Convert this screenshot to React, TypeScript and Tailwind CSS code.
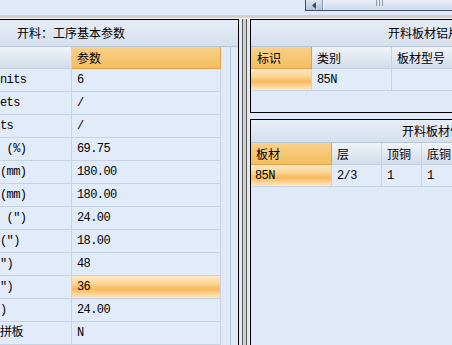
import React from "react"

const MONO = "font-['Liberation_Mono','Noto_Sans_CJK_SC',monospace]"
const CJK = "font-['Noto_Sans_CJK_SC',sans-serif]"

const ROWS: { label: string; value: string; active?: boolean }[] = [
    { label: "nits", value: "6" },
    { label: "ets", value: "/" },
    { label: "ts", value: "/" },
    { label: "\u00a0(%)", value: "69.75" },
    { label: "(mm)", value: "180.00" },
    { label: "(mm)", value: "180.00" },
    { label: "\u00a0(\u2033)", value: "24.00" },
    { label: "(\u2033)", value: "18.00" },
    { label: "\u2033)", value: "48" },
    { label: "\u2033)", value: "36", active: true },
    { label: ")", value: "24.00" },
    { label: "拼板", value: "N" },
]

const orangeHead = "bg-gradient-to-b from-[#f9d189] to-[#f5bd5e] border-b border-[#e0a245]"
const grayHead = "bg-gradient-to-b from-[#f0f4f9] to-[#d3dce9] border-b border-[#b7c4d6]"
const activeCell = "bg-[linear-gradient(to_bottom,#fde9c4_0%,#fcd493_35%,#f9b95a_60%,#fdd9a0_85%,#fee7c2_100%)]"

const Cell = ({ w, className = "", children }: { w: string; className?: string; children?: React.ReactNode }) => (
    <div className={`${w} shrink-0 h-full flex items-center border-r border-[#c6d3e5] overflow-hidden whitespace-pre ${className}`}>
        {children}
    </div>
)

const PanelTitle = ({ h, pl, text }: { h: string; pl: string; text: string }) => (
    <div className={`${h} ${pl} flex items-center whitespace-nowrap overflow-hidden bg-gradient-to-b from-[#e6edf6] to-[#d6e0ec] border-b border-[#b9c6d8] text-[12px] text-black ${CJK}`}>
        {text}
    </div>
)

export default function App() {
    return (
        <div className={`w-[452px] h-[345px] overflow-hidden bg-[#dfe9f8] flex flex-col text-black ${MONO}`}>
            {/* top strip with horizontal scrollbar */}
            <div className="h-[15px] shrink-0 flex">
                <div className="ml-[305px] w-[147px] h-[11px] border border-t-0 border-r-0 border-[#3c4c66] flex bg-[#cfdbea]">
                    <div className="w-[17px] h-full flex items-center justify-center bg-gradient-to-b from-[#dde6f2] to-[#b3c3d8] border-r border-[#8a9ab2]">
                        <svg width="5" height="7" viewBox="0 0 5 7"><path d="M4 0 L0 3.5 L4 7 Z" fill="#3e4a5c" /></svg>
                    </div>
                    <div className="flex-1 h-full bg-gradient-to-b from-[#e9eff7] to-[#cdd9e8] border-l border-[#f4f7fb] flex justify-center items-start">
                        <div className="ml-[-17px] flex gap-[2px] h-[6px] mt-0">
                            <div className="w-px bg-[#8d9bb0]" />
                            <div className="w-px bg-[#8d9bb0]" />
                            <div className="w-px bg-[#8d9bb0]" />
                        </div>
                    </div>
                </div>
            </div>
            <div className="h-[3px] shrink-0 bg-[#d4d0c8]" />
            <div className="h-px shrink-0 bg-[#f2f5fa]" />

            <div className="flex-1 flex min-h-0">
                {/* left panel */}
                <div className="w-[239px] shrink-0 border-t border-r border-black flex flex-col">
                    <PanelTitle h="h-[27px]" pl="pl-[17px]" text="开料：工序基本参数" />
                    <div className="flex flex-1 min-h-0">
                        <div className="w-[231px] shrink-0 border-r border-[#b4c2d6] flex flex-col text-[12px] tracking-[-0.6px]">
                            <div className="h-[22px] flex shrink-0">
                                <Cell w="w-[72px]" className={grayHead}></Cell>
                                <Cell w="w-[149px]" className={`${orangeHead} pl-[5px] ${CJK} tracking-normal`}>参数</Cell>
                            </div>
                            {ROWS.map((r, i) => (
                                <div key={i} className="h-[23px] flex shrink-0">
                                    <Cell w="w-[72px]" className="border-b bg-[#e1ebfa]">{r.label}</Cell>
                                    <Cell w="w-[149px]" className={`border-b pl-[5px] ${r.active ? activeCell : "bg-[#e1ebfa]"}`}>{r.value}</Cell>
                                </div>
                            ))}
                        </div>
                    </div>
                </div>

                {/* splitter */}
                <div className="w-[3px] shrink-0" />
                <div className="w-[5px] shrink-0 bg-[#d4d0c8] border-x border-[#5a5a5a]" />
                <div className="w-[3px] shrink-0" />

                {/* right column */}
                <div className="flex-1 min-w-0 flex flex-col">
                    <div className="h-[94px] shrink-0 border-t border-l border-b border-black flex flex-col overflow-hidden">
                        <PanelTitle h="h-[27px]" pl="pl-[137px]" text="开料板材铝片信息" />
                        <div className="h-[22px] flex shrink-0 text-[12px] tracking-[-0.6px]">
                            <Cell w="w-[61px]" className={`${orangeHead} pl-[6px] ${CJK} tracking-normal`}>标识</Cell>
                            <Cell w="w-[80px]" className={`${grayHead} pl-[5px] ${CJK} tracking-normal`}>类别</Cell>
                            <Cell w="w-[90px]" className={`${grayHead} pl-[5px] ${CJK} tracking-normal`}>板材型号</Cell>
                        </div>
                        <div className="h-[22px] flex shrink-0 text-[12px] tracking-[-0.6px]">
                            <Cell w="w-[61px]" className={`border-b ${activeCell}`}></Cell>
                            <Cell w="w-[80px]" className="border-b pl-[5px] bg-[#e1ebfa]">85N</Cell>
                            <Cell w="w-[90px]" className="border-b bg-[#e1ebfa]"></Cell>
                        </div>
                    </div>
                    <div className="h-[6px] shrink-0" />
                    <div className="flex-1 border-t border-l border-black flex flex-col overflow-hidden">
                        <PanelTitle h="h-[23px]" pl="pl-[151px]" text="开料板材信息" />
                        <div className="h-[22px] flex shrink-0 text-[12px] tracking-[-0.6px]">
                            <Cell w="w-[81px]" className={`${orangeHead} pl-[5px] ${CJK} tracking-normal`}>板材</Cell>
                            <Cell w="w-[50px]" className={`${grayHead} pl-[5px] ${CJK} tracking-normal`}>层</Cell>
                            <Cell w="w-[40px]" className={`${grayHead} pl-[5px] ${CJK} tracking-normal`}>顶铜</Cell>
                            <Cell w="w-[40px]" className={`${grayHead} pl-[5px] ${CJK} tracking-normal`}>底铜</Cell>
                        </div>
                        <div className="h-[22px] flex shrink-0 text-[12px] tracking-[-0.6px]">
                            <Cell w="w-[81px]" className={`border-b pl-[4px] ${activeCell}`}>85N</Cell>
                            <Cell w="w-[50px]" className="border-b pl-[5px] bg-[#e1ebfa]">2/3</Cell>
                            <Cell w="w-[40px]" className="border-b pl-[5px] bg-[#e1ebfa]">1</Cell>
                            <Cell w="w-[40px]" className="border-b pl-[5px] bg-[#e1ebfa]">1</Cell>
                        </div>
                    </div>
                </div>
            </div>
        </div>
    )
}
